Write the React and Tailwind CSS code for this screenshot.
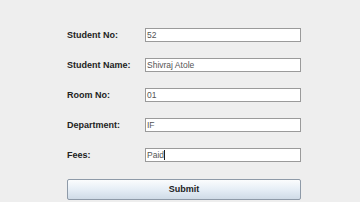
import React from "react";

const fields = [
  { label: "Student No:", value: "52" },
  { label: "Student Name:", value: "Shivraj Atole" },
  { label: "Room No:", value: "01" },
  { label: "Department:", value: "IF" },
  { label: "Fees:", value: "Paid", caret: true },
];

export default function App() {
  return (
    <div
      className="w-[360px] h-[202px] bg-[#eeeeee] overflow-hidden"
      style={{ fontFamily: "'Liberation Sans', Arial, sans-serif" }}
    >
      <div className="pl-[67px] pt-[28px] w-[301px] box-content flex flex-col">
        <div className="flex flex-col gap-[16px]">
          {fields.map((f) => (
            <div key={f.label} className="flex items-center h-[14px]">
              <span className="w-[78px] text-[9px] font-bold text-[#222222] leading-none">
                {f.label}
              </span>
              <div className="w-[156px] h-[14px] bg-white border border-[#9a9a9a] flex items-center pl-[1px]">
                <span className="text-[8.5px] text-[#555555] leading-none">
                  {f.value}
                </span>
                {f.caret && <span className="w-px h-[10px] bg-[#222222]" />}
              </div>
            </div>
          ))}
        </div>
        <button className="mt-[17px] w-[234px] h-[21px] border border-[#8e9aa8] rounded-[2px] bg-gradient-to-b from-[#fbfcfd] via-[#e6eef6] to-[#cfdbe7] text-[9px] font-bold text-[#222222] leading-none">
          Submit
        </button>
      </div>
    </div>
  );
}
